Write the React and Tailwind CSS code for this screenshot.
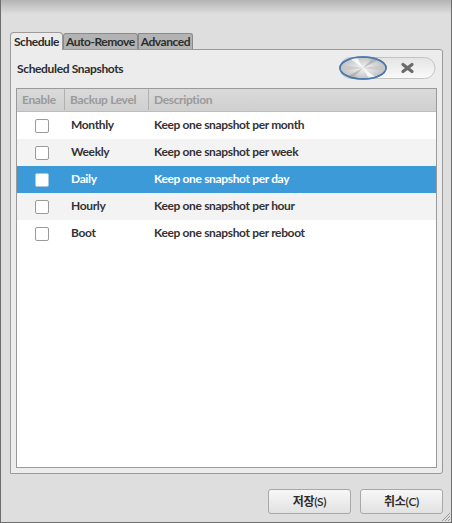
import React from "react";

const rows = [
  { level: "Monthly", desc: "Keep one snapshot per month" },
  { level: "Weekly", desc: "Keep one snapshot per week" },
  { level: "Daily", desc: "Keep one snapshot per day", selected: true },
  { level: "Hourly", desc: "Keep one snapshot per hour" },
  { level: "Boot", desc: "Keep one snapshot per reboot" },
];

function Switch() {
  return (
    <svg width="97" height="24" viewBox="0 0 97 24">
      <defs>
        <linearGradient id="trk" x1="0" y1="0" x2="0" y2="1">
          <stop offset="0" stopColor="#e4e4e4" />
          <stop offset="1" stopColor="#fafafa" />
        </linearGradient>
        <radialGradient id="kn" cx="0.5" cy="0.5" r="0.6">
          <stop offset="0" stopColor="#f4f4f4" />
          <stop offset="1" stopColor="#b8b8b8" />
        </radialGradient>
      </defs>
      <rect x="1" y="1.5" width="95" height="21" rx="10.5" fill="url(#trk)" stroke="#c4c4c4" />
      <path d="M64 8.5 L73 15.5 M73 8.5 L64 15.5" stroke="#6a6a6a" strokeWidth="3.2" strokeLinecap="round" />
      <ellipse cx="24" cy="12" rx="23" ry="11" fill="url(#kn)" stroke="#4b7bb0" strokeWidth="1.5" />
      <path d="M24 12 L2 9 L2 15 Z" fill="#c4c4c4" opacity="0.7" />
      <path d="M24 12 L46 9 L46 15 Z" fill="#c4c4c4" opacity="0.7" />
      <path d="M24 12 L10 2 L18 1.5 Z" fill="#ffffff" opacity="0.8" />
      <path d="M24 12 L38 22 L30 22.5 Z" fill="#ffffff" opacity="0.8" />
      <path d="M24 12 L34 2 L40 3.5 Z" fill="#9a9a9a" opacity="0.5" />
      <path d="M24 12 L14 22 L8 20.5 Z" fill="#9a9a9a" opacity="0.5" />
      <ellipse cx="24" cy="12" rx="23" ry="11" fill="none" stroke="#4b7bb0" strokeWidth="1.5" />
    </svg>
  );
}

function Checkbox({ selected }) {
  return (
    <div
      className={`w-[14px] h-[14px] rounded-[2px] border ${
        selected ? "border-[#a9c7e3] bg-white" : "border-[#9a9a9a] bg-white"
      }`}
    />
  );
}

export default function App() {
  return (
    <div
      className="w-[452px] h-[523px] flex flex-col bg-[#dedede] border-x border-b border-[#6e6e6e] text-[#3a3a3a] tracking-[-0.35px]"
      style={{ fontFamily: 'Lato, "Noto Sans CJK KR", sans-serif' }}
    >
      <div className="h-[14px] bg-gradient-to-b from-[#b4b4b4] to-[#dedede]" />
      <div className="flex flex-col pl-[9px] pr-[8px] pt-[18px]">
        {/* Tabs */}
        <div className="flex items-end h-[17px] text-[12px] font-bold leading-none tracking-[-0.45px]">
          <div className="h-[18px] -mb-px z-10 px-[3px] pt-[3px] bg-[#ececec] border border-b-0 border-[#9a9a9a] rounded-t-[4px] text-[#2d2d2d]">
            Schedule
          </div>
          <div className="h-[16px] px-[2px] pt-[2px] bg-[#b3b3b3] border border-b-0 border-[#8a8a8a] rounded-t-[3px] text-[#2d2d2d]">
            Auto-Remove
          </div>
          <div className="h-[16px] px-[2px] pt-[2px] bg-[#b3b3b3] border border-b-0 border-[#8a8a8a] rounded-tr-[3px] text-[#2d2d2d]">
            Advanced
          </div>
        </div>
        {/* Panel */}
        <div className="h-[425px] bg-[#ececec] border border-[#9a9a9a] rounded-r-[3px] flex flex-col px-[5px] pb-[5px]">
          <div className="h-[38px] flex items-center justify-between">
            <span className="text-[12px] font-bold text-[#2d2d2d] pl-[1px]">Scheduled Snapshots</span>
            <div className="pr-[1px] -mt-[2px]">
              <Switch />
            </div>
          </div>
          <div className="flex-1 bg-white border border-[#9a9a9a] flex flex-col text-[12px] font-bold">
            <div className="h-[23px] flex items-center bg-gradient-to-b from-[#dadada] to-[#cfcfcf] border-b border-[#bdbdbd] text-[#9a9a9a] pb-[1px]">
              <div className="w-[48px] h-full flex items-center pl-[5px] border-r border-[#b0b0b0]">Enable</div>
              <div className="w-[84px] h-full flex items-center pl-[5px] border-r border-[#b0b0b0]">Backup Level</div>
              <div className="flex-1 h-full flex items-center pl-[5px]">Description</div>
            </div>
            {rows.map((r, i) => (
              <div
                key={r.level}
                className={`h-[27px] flex items-center ${
                  r.selected
                    ? "bg-[#3d9ad9] text-white"
                    : i % 2 === 1
                    ? "bg-[#f3f3f3] text-[#333333]"
                    : "bg-white text-[#333333]"
                }`}
              >
                <div className="w-[49px] flex justify-center pl-[1px]">
                  <Checkbox selected={r.selected} />
                </div>
                <div className="w-[83px] pl-[5px] pb-[1px]">{r.level}</div>
                <div className="flex-1 pl-[5px] pb-[1px]">{r.desc}</div>
              </div>
            ))}
          </div>
        </div>
      </div>
      {/* Buttons */}
      <div className="flex justify-end gap-[9px] pr-[8px] pt-[15px] relative flex-1">
        <button className="w-[83px] h-[25px] rounded-[3px] border border-[#a8a8a8] bg-gradient-to-b from-[#f7f7f7] to-[#e2e2e2] text-[12px] font-semibold text-[#2d2d2d]">
          저장(S)
        </button>
        <button className="w-[83px] h-[25px] rounded-[3px] border border-[#a8a8a8] bg-gradient-to-b from-[#f7f7f7] to-[#e2e2e2] text-[12px] font-semibold text-[#2d2d2d]">
          취소(C)
        </button>
        <svg className="absolute right-0 bottom-0" width="12" height="12" viewBox="0 0 12 12">
          <path d="M11 3 L3 11 M11 6 L6 11 M11 9 L9 11" stroke="#9a9a9a" strokeWidth="1" />
        </svg>
      </div>
    </div>
  );
}
